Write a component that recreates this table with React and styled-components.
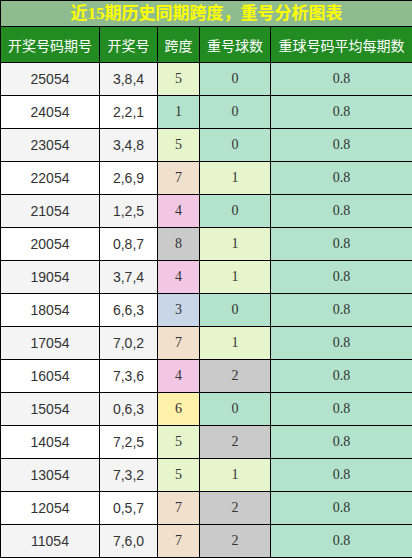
import React from "react";
import styled, { createGlobalStyle } from "styled-components";

const Global = createGlobalStyle`
  body {
    margin: 0;
    background: #fff;
  }
`;

const rows = [
  ["25054", "3,8,4", 5, 0],
  ["24054", "2,2,1", 1, 0],
  ["23054", "3,4,8", 5, 0],
  ["22054", "2,6,9", 7, 1],
  ["21054", "1,2,5", 4, 0],
  ["20054", "0,8,7", 8, 1],
  ["19054", "3,7,4", 4, 1],
  ["18054", "6,6,3", 3, 0],
  ["17054", "7,0,2", 7, 1],
  ["16054", "7,3,6", 4, 2],
  ["15054", "0,6,3", 6, 0],
  ["14054", "7,2,5", 5, 2],
  ["13054", "7,3,2", 5, 1],
  ["12054", "0,5,7", 7, 2],
  ["11054", "7,6,0", 7, 2],
];

const widths = [99, 58, 42, 71, 142];

const spanColors = {
  1: "#b3e3cc",
  3: "#c9d6e8",
  4: "#f2c7e4",
  5: "#e6f5cb",
  6: "#fff0aa",
  7: "#f0e0cc",
  8: "#cacaca",
};

const repeatColors = {
  0: "#b3e3cc",
  1: "#e6f5cb",
  2: "#cacaca",
};

const Table = styled.table`
  width: 412px;
  border-collapse: collapse;
  table-layout: fixed;
  text-align: center;
`;

const Col = styled.col`
  width: ${(p) => p.$w}px;
`;

const TitleCell = styled.td`
  height: 25px;
  padding: 0;
  border: 1px solid #000;
  background: #8fbc8f;
  color: #ffff00;
  font-family: "Liberation Serif", "Noto Sans CJK SC", serif;
  font-weight: bold;
  font-size: 17px;
  line-height: 25px;
`;

const HeadCell = styled.th`
  height: 35px;
  padding: 0;
  border: 1px solid #000;
  background: #228b22;
  color: #fff;
  font-family: "Noto Sans CJK SC", sans-serif;
  font-weight: normal;
  font-size: 14px;
  white-space: nowrap;
`;

const Cell = styled.td`
  height: 32px;
  padding: 0;
  border: 1px solid #000;
  background: ${(p) => p.$bg};
  color: #333;
  font-family: ${(p) =>
    p.$serif ? '"Liberation Serif", serif' : '"Liberation Sans", sans-serif'};
  font-size: 14px;
`;

export default function App() {
  return (
    <>
      <Global />
      <Table>
        <colgroup>
          {widths.map((w, i) => (
            <Col key={i} $w={w} />
          ))}
        </colgroup>
        <thead>
          <tr>
            <TitleCell colSpan={5}>近15期历史同期跨度，重号分析图表</TitleCell>
          </tr>
          <tr>
            <HeadCell>开奖号码期号</HeadCell>
            <HeadCell>开奖号</HeadCell>
            <HeadCell>跨度</HeadCell>
            <HeadCell>重号球数</HeadCell>
            <HeadCell>重球号码平均每期数</HeadCell>
          </tr>
        </thead>
        <tbody>
          {rows.map(([issue, nums, span, rep], i) => {
            const base = i % 2 === 0 ? "#f4f4f4" : "#fff";
            return (
              <tr key={issue}>
                <Cell $bg={base}>{issue}</Cell>
                <Cell $bg={base}>{nums}</Cell>
                <Cell $bg={spanColors[span]} $serif>
                  {span}
                </Cell>
                <Cell $bg={repeatColors[rep]} $serif>
                  {rep}
                </Cell>
                <Cell $bg="#b3e3cc" $serif>
                  0.8
                </Cell>
              </tr>
            );
          })}
        </tbody>
      </Table>
    </>
  );
}
